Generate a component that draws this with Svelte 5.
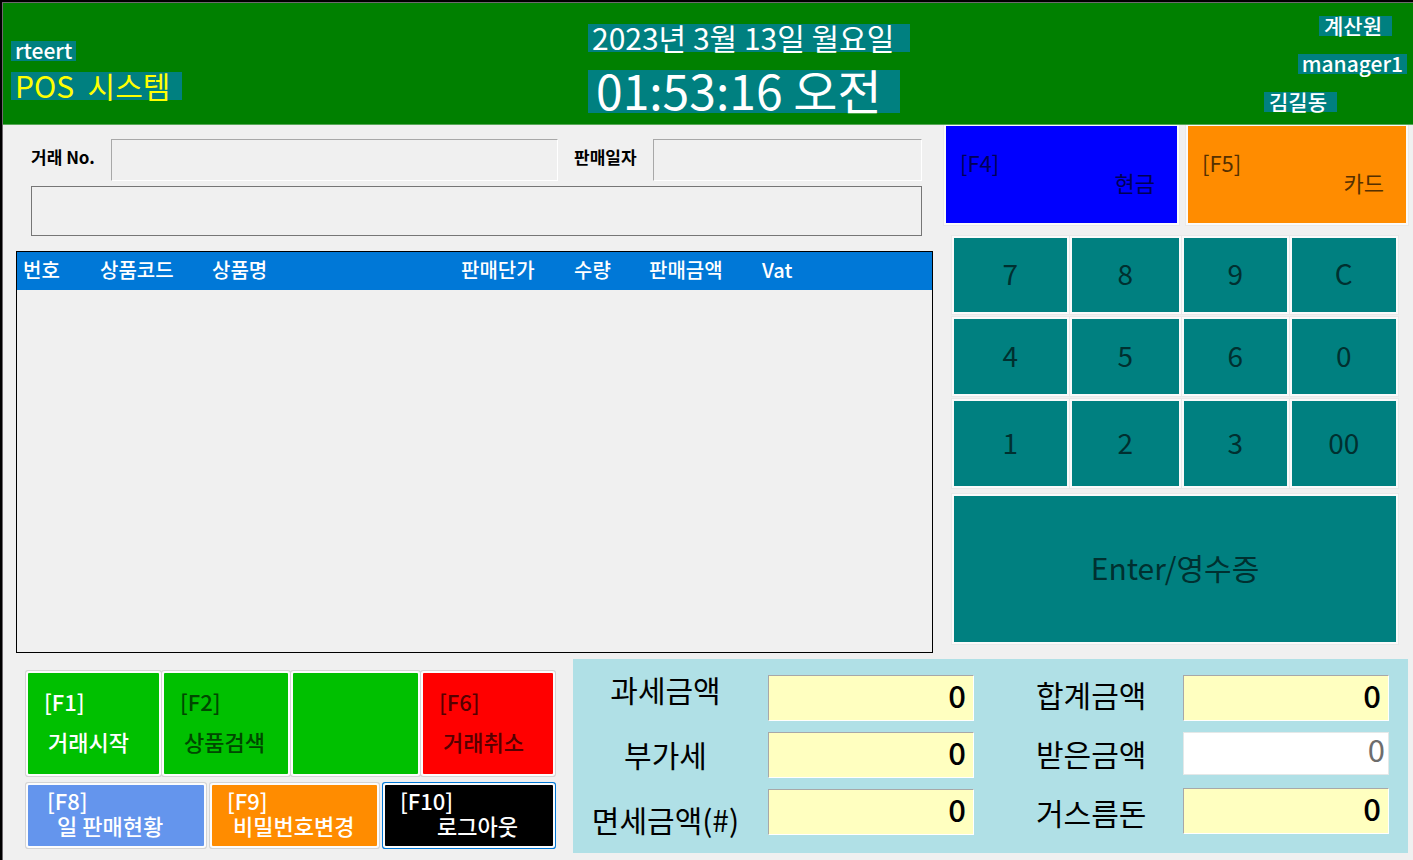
<script>
  const columns = [
    { name: '번호', width: 77 },
    { name: '상품코드', width: 112 },
    { name: '상품명', width: 249 },
    { name: '판매단가', width: 113 },
    { name: '수량', width: 75 },
    { name: '판매금액', width: 113 },
    { name: 'Vat', width: 176 }
  ];
  const columnTotal = columns.reduce((sum, c) => sum + c.width, 0);
  const keys = ['7', '8', '9', 'C', '4', '5', '6', '0', '1', '2', '3', '00'];
</script>

<div class="app">
  <header>
    <div class="store">
      <span class="tag">rteert</span>
      <h1 class="tag large">{'POS  시스템'}</h1>
    </div>
    <div class="clock">
      <span class="tag large date">2023년 3월 13일 월요일</span>
      <time class="tag time">01:53:16 오전</time>
    </div>
    <div class="cashier">
      <span class="tag role">계산원</span>
      <span class="tag">manager1</span>
      <span class="tag person">김길동</span>
    </div>
  </header>

  <main>
    <section class="sale">
      <div class="fields">
        <label for="trade-no">거래 No.</label>
        <input id="trade-no" class="sunken" readonly />
        <label for="sale-date">판매일자</label>
        <input id="sale-date" class="sunken" readonly />
      </div>
      <output class="message"></output>
      <div class="list">
        <table>
          <colgroup>
            {#each columns as c}
              <col style="width: {(c.width / columnTotal) * 100}%" />
            {/each}
          </colgroup>
          <thead>
            <tr>
              {#each columns as c}
                <th scope="col">{c.name}</th>
              {/each}
            </tr>
          </thead>
          <tbody></tbody>
        </table>
      </div>
    </section>

    <section class="pay">
      <div class="methods">
        <button class="method cash" disabled><span>[F4]</span><span>현금</span></button>
        <button class="method card" disabled><span>[F5]</span><span>카드</span></button>
      </div>
      <div class="keypad">
        {#each keys as key}
          <button class="key" disabled>{key}</button>
        {/each}
      </div>
      <button class="key enter" disabled>Enter/영수증</button>
    </section>
  </main>

  <footer>
    <div class="functions">
      <div class="row first">
        <button class="fn green"><span>[F1]</span><span>거래시작</span></button>
        <button class="fn green" disabled><span>[F2]</span><span>상품검색</span></button>
        <button class="fn green" aria-label="F3"></button>
        <button class="fn red" disabled><span>[F6]</span><span>거래취소</span></button>
      </div>
      <div class="row second">
        <button class="fn blue"><span>[F8]</span><span>일 판매현황</span></button>
        <button class="fn orange"><span>[F9]</span><span>비밀번호변경</span></button>
        <button class="fn black"><span>[F10]</span><span>로그아웃</span></button>
      </div>
    </div>

    <div class="totals">
      <div class="names centered">
        <label for="taxable">과세금액</label>
        <label for="vat">부가세</label>
        <label for="exempt">면세금액(#)</label>
      </div>
      <div class="values">
        <input id="taxable" class="sunken amount" value="0" readonly />
        <input id="vat" class="sunken amount" value="0" readonly />
        <input id="exempt" class="sunken amount" value="0" readonly />
      </div>
      <div class="names">
        <label for="total">합계금액</label>
        <label for="received">받은금액</label>
        <label for="change">거스름돈</label>
      </div>
      <div class="values">
        <input id="total" class="sunken amount" value="0" readonly />
        <input id="received" class="received" value="0" disabled />
        <input id="change" class="sunken amount" value="0" readonly />
      </div>
    </div>
  </footer>
</div>

<style>
  :global(body) {
    background: #000;
  }

  .app {
    box-sizing: border-box;
    min-height: calc(100vh - 2px);
    margin: 2px 0 0 2px;
    border: solid #6e6a6e;
    border-width: 1px 0 0 1px;
    background: #f0f0f0;
    color: #000;
    font-family: 'Noto Sans CJK KR', 'Liberation Sans', sans-serif;
    font-size: 22px;
    overflow: hidden;
  }

  .app * {
    box-sizing: border-box;
  }

  button,
  input {
    font: inherit;
    margin: 0;
    padding: 0;
    border: 0;
    min-width: 0;
  }

  header {
    position: relative;
    z-index: 1;
    display: grid;
    grid-template-columns: minmax(0, 585fr) minmax(0, 320fr) minmax(0, 505fr);
    height: 122px;
    background: #008000;
    border-bottom: 1px solid #58a858;
  }

  .tag {
    margin: 0;
    padding: 0 4px 2px;
    background: #008080;
    color: #fff;
    font-size: 21px;
    font-weight: 500;
    line-height: 18px;
    white-space: pre;
  }

  .tag.large {
    padding-bottom: 2px;
    font-size: 30px;
    font-weight: 400;
    line-height: 26px;
  }

  .tag.time {
    padding: 0 18px 4px 8px;
    font-size: 48px;
    font-weight: 400;
    line-height: 39px;
  }

  .store,
  .clock,
  .cashier {
    display: flex;
    flex-direction: column;
    align-items: flex-start;
  }

  .store {
    gap: 11px;
    padding: 38px 0 0 8px;
  }

  .store h1.tag {
    padding-right: 12px;
    color: #ff0;
  }

  .clock {
    gap: 18px;
    padding-top: 21px;
  }

  .tag.date {
    padding-right: 16px;
  }

  .cashier {
    align-items: flex-end;
    gap: 18px;
    padding: 13px 6px 0 0;
  }

  .tag.role {
    margin-right: 15px;
    padding-right: 10px;
    padding-left: 5px;
  }

  .tag.person {
    margin-right: 70px;
    padding-right: 10px;
    padding-left: 5px;
  }

  main {
    display: grid;
    grid-template-columns: 933fr 477fr;
  }

  .sale {
    display: flex;
    flex-direction: column;
    padding: 14px 3px 0 13px;
  }

  .fields {
    display: grid;
    grid-template-columns: auto 445fr auto 268fr;
    align-items: center;
    gap: 16px;
    margin: 0 11px 5px 15px;
    font-size: 17px;
    font-weight: 700;
  }

  .fields label {
    line-height: 20px;
    padding-bottom: 7px;
    white-space: nowrap;
  }

  .sunken {
    width: 100%;
    height: 42px;
    border: solid;
    border-width: 1px;
    border-color: #a8a8a8 #fff #fff #a8a8a8;
    background: #f0f0f0;
    outline: 0;
  }

  .message {
    display: block;
    height: 50px;
    margin: 0 11px 15px 15px;
    border: 1px solid #767676;
  }

  .list {
    flex: 1;
    border: 1px solid #000;
  }

  table {
    width: 100%;
    table-layout: fixed;
    border-collapse: collapse;
  }

  thead {
    background: #0078d7;
    color: #fff;
  }

  th {
    height: 38px;
    padding: 0 0 2px 6px;
    font-size: 20px;
    font-weight: 500;
    line-height: 20px;
    text-align: left;
    white-space: nowrap;
  }

  .pay {
    display: flex;
    flex-direction: column;
    padding: 1px 7px 11px 10px;
  }

  button {
    box-shadow: 0 0 0 2px #fafafa, 0 0 0 3px #e9e9e9;
  }

  .methods {
    display: grid;
    grid-template-columns: 231fr 218fr;
    gap: 11px;
  }

  .method {
    display: flex;
    flex-direction: column;
    justify-content: center;
    height: 97px;
    padding: 0 22px 5px 14px;
    line-height: 20px;
  }

  .method span {
    align-self: flex-start;
  }

  .method span:last-child {
    align-self: flex-end;
  }

  .cash {
    background: #00f;
    color: #000055;
  }

  .card {
    background: #ff8c00;
    color: #553000;
  }

  .keypad {
    display: grid;
    grid-template-columns: 112fr 107fr 102fr 104fr;
    grid-template-rows: 74px 75px 85px;
    gap: 7px 5px;
    margin: 15px 10px 10px 8px;
  }

  .key {
    padding-bottom: 4px;
    background: #008080;
    color: #003030;
    font-size: 28px;
    line-height: 28px;
  }

  .enter {
    height: 146px;
    margin: 0 10px 0 8px;
    font-size: 30px;
  }

  footer {
    display: grid;
    grid-template-columns: 570fr 840fr;
    align-items: start;
    padding: 6px 0;
  }

  .functions {
    padding: 14px 20px 0 25px;
  }

  .row {
    display: grid;
    gap: 5px;
  }

  .first {
    grid-template-columns: 131fr 124fr 125fr 130fr;
    margin-bottom: 11px;
  }

  .second {
    grid-template-columns: 176fr 165fr 168fr;
    gap: 8px;
  }

  .fn {
    display: flex;
    flex-direction: column;
    align-items: flex-start;
    border-radius: 1px;
    color: #fff;
    font-weight: 500;
    line-height: 20px;
    white-space: nowrap;
    box-shadow: 0 0 0 2px #fcfcfc, 0 0 0 3px #d4d4d4;
  }

  .first .fn {
    gap: 20px;
    height: 101px;
    padding: 18px 0 0 16px;
  }

  .first .fn span:last-child {
    padding-left: 4px;
  }

  .second .fn {
    gap: 5px;
    height: 61px;
    padding: 5px 0 0 15px;
  }

  .second .fn span:last-child {
    padding-left: 6px;
  }

  .second .blue {
    padding-left: 19px;
  }

  .second .blue span:last-child {
    padding-left: 10px;
  }

  .second .black span:last-child {
    padding-left: 37px;
  }

  .green {
    background: #00c000;
  }

  .green:disabled {
    color: #004800;
  }

  .red {
    background: #f00;
  }

  .red:disabled {
    color: #550000;
  }

  .blue {
    background: #6495ed;
  }

  .orange {
    background: #ff8c00;
  }

  .black {
    background: #000;
    box-shadow: 0 0 0 2px #fcfcfc, 0 0 0 3px #0078d7;
  }

  .totals {
    display: grid;
    grid-template-columns: 195fr 206fr 209fr 206fr;
    height: 194px;
    margin-right: 5px;
    padding-right: 19px;
    background: #b0e0e6;
  }

  .names {
    display: flex;
    flex-direction: column;
    gap: 31px;
    padding: 21px 0 0 62px;
    font-size: 30px;
    line-height: 28px;
    white-space: nowrap;
  }

  .names.centered {
    align-items: center;
    gap: 37px;
    padding: 16px 10px 0 0;
  }

  .values {
    display: flex;
    flex-direction: column;
    gap: 11px;
    padding-top: 16px;
    font-size: 31px;
  }

  .values .amount {
    height: 46px;
    padding: 0 7px 8px 0;
    background: #ffffc0;
    font-weight: 500;
    text-align: right;
  }

  .received {
    width: 100%;
    height: 43px;
    margin-bottom: 2px;
    padding: 0 3px 11px 0;
    border: 1px solid #e4e8e8;
    background: #fff;
    color: #6d6d6d;
    text-align: right;
  }
</style>
